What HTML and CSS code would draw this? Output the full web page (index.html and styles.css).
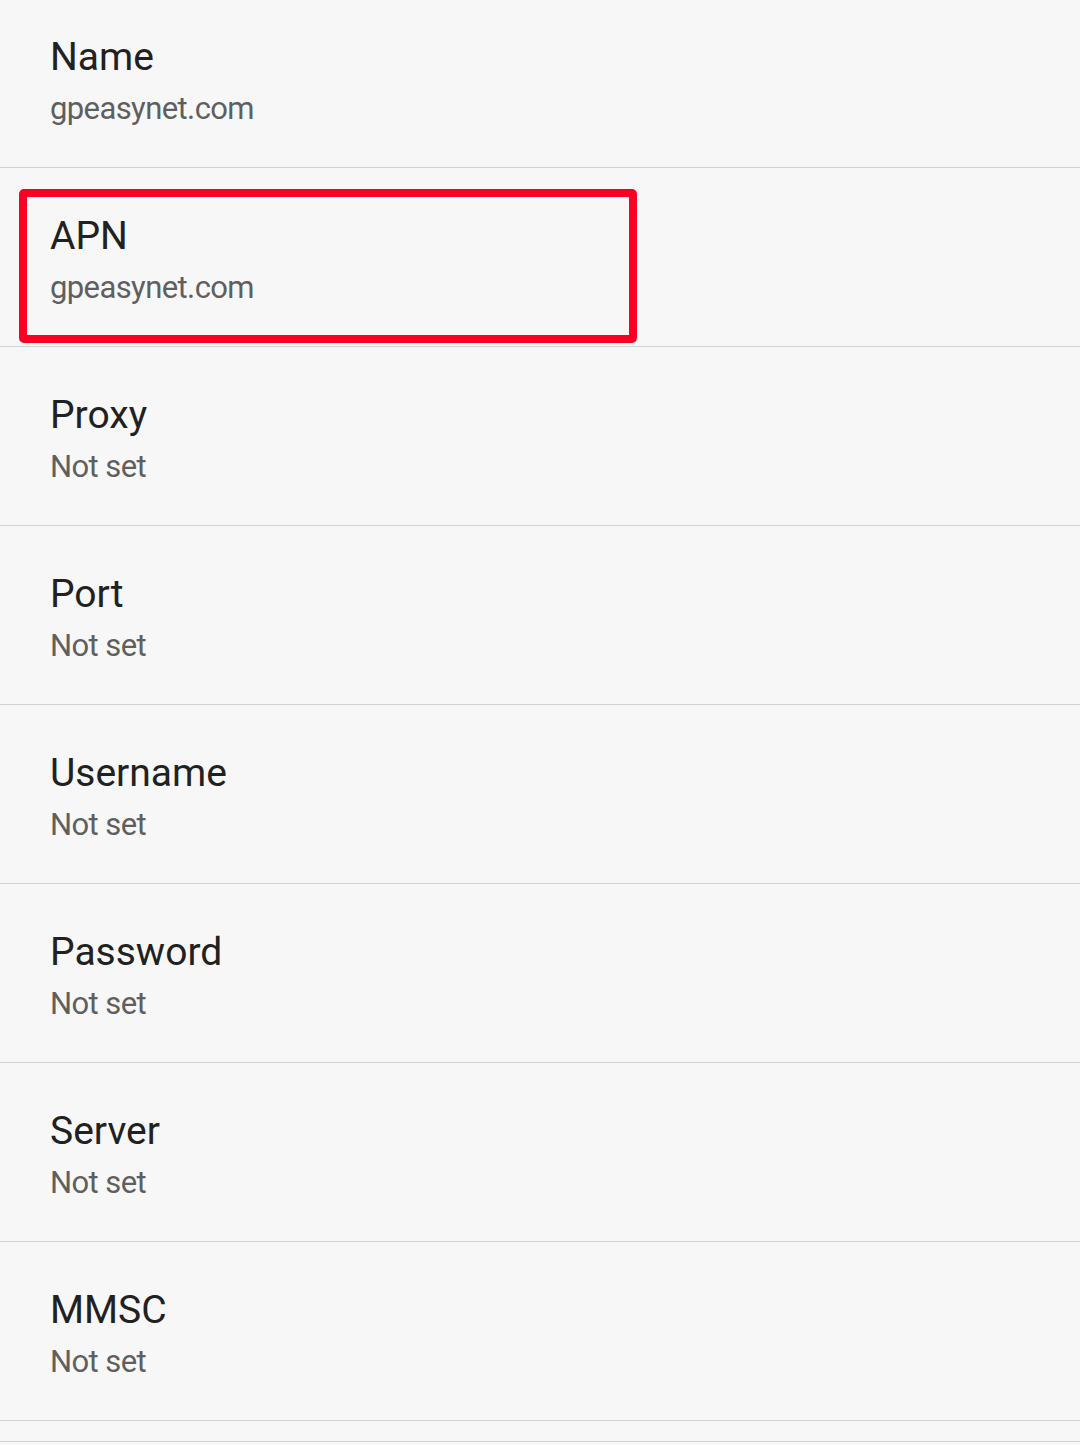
FILE: index.html
```html
<!DOCTYPE html>
<html>
<head>
<meta charset="utf-8">
<link rel="stylesheet" href="styles.css">
</head>
<body>
<div class="list">
  <div class="row"><div class="title">Name</div><div class="summary">gpeasynet.com</div></div>
  <div class="row highlighted"><div class="title">APN</div><div class="summary">gpeasynet.com</div><div class="mark"></div></div>
  <div class="row"><div class="title">Proxy</div><div class="summary">Not set</div></div>
  <div class="row"><div class="title">Port</div><div class="summary">Not set</div></div>
  <div class="row"><div class="title">Username</div><div class="summary">Not set</div></div>
  <div class="row"><div class="title">Password</div><div class="summary">Not set</div></div>
  <div class="row"><div class="title">Server</div><div class="summary">Not set</div></div>
  <div class="row"><div class="title">MMSC</div><div class="summary">Not set</div></div>
  <div class="row tail"></div>
</div>
</body>
</html>
```
FILE: styles.css
```css
html, body {
  margin: 0;
  padding: 0;
  background: #f7f7f7;
  overflow: hidden;
}
body {
  font-family: Roboto, "Liberation Sans", sans-serif;
}
.list {
  margin-top: -11px;
  display: flex;
  flex-direction: column;
}
.row {
  position: relative;
  height: 178px;
  box-sizing: content-box;
  border-bottom: 1px solid #d2d2d2;
  padding-left: 50px;
  display: flex;
  flex-direction: column;
}
.row.tail {
  height: 20px;
}
.title {
  margin-top: 44px;
  font-size: 39px;
  line-height: 48px;
  color: #212121;
}
.summary {
  margin-top: 8px;
  font-size: 31px;
  line-height: 40px;
  letter-spacing: -0.6px;
  color: #5f5f5f;
}
.mark {
  position: absolute;
  left: 19px;
  top: 21px;
  width: 618px;
  height: 154px;
  box-sizing: border-box;
  border: 8px solid #fb0022;
  border-radius: 5px;
}
```
